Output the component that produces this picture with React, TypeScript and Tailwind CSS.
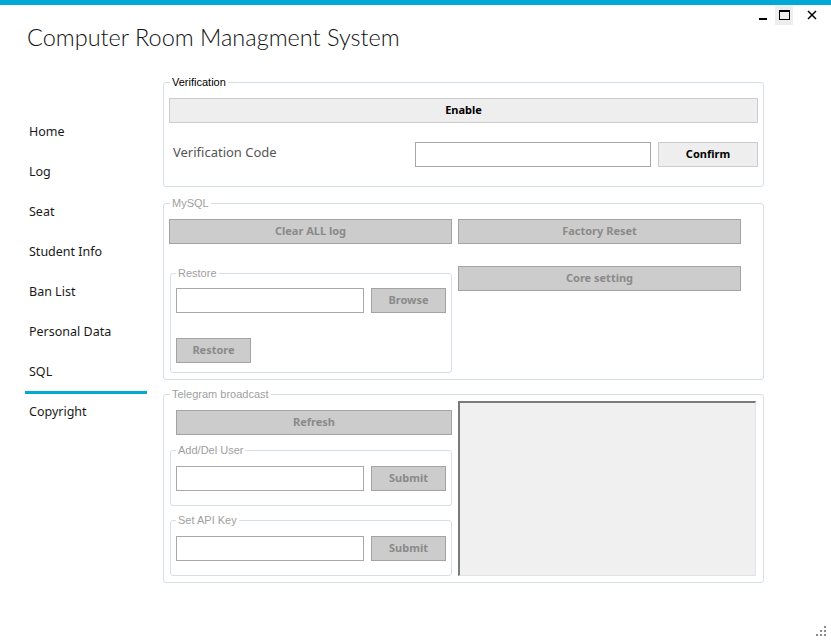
import React from "react";

const seg = { fontFamily: "'Noto Sans', 'Open Sans', sans-serif" };
const ms = { fontFamily: "'Liberation Sans', Arial, sans-serif" };
const light = { fontFamily: "Lato, 'Noto Sans', sans-serif" };

function Legend({ children, dim }: { children: React.ReactNode; dim?: boolean }) {
  return (
    <legend
      className={`ml-[1px] px-[2px] text-[11px] leading-[14px] ${dim ? "text-[#a0a0a0]" : "text-black"}`}
      style={ms}
    >
      {children}
    </legend>
  );
}

function Btn({ children, w, dim, className = "" }: { children: React.ReactNode; w: string; dim?: boolean; className?: string }) {
  return (
    <div
      className={`${w} h-[25px] flex items-center justify-center text-[11px] font-bold border ${
        dim ? "bg-[#cccccc] border-[#a3a3a3] text-[#8a8a8a]" : "bg-[#eeeeee] border-[#cccccc] text-black"
      } ${className}`}
      style={seg}
    >
      {children}
    </div>
  );
}

function Input({ w }: { w: string }) {
  return <div className={`${w} h-[25px] border border-[#a8a8a8] bg-white`} />;
}

export default function App() {
  const nav = ["Home", "Log", "Seat", "Student Info", "Ban List", "Personal Data", "SQL", "Copyright"];
  return (
    <div className="w-[831px] h-[641px] bg-white relative overflow-hidden">
      <div className="h-[5px] bg-[#00a9d6]" />
      <div className="flex h-[70px] justify-between">
        <div
          className="pl-[27px] pt-[16px] text-[23.5px] leading-[32px] font-light text-[#111]"
          style={light}
        >
          Computer Room Managment System
        </div>
        <div className="flex items-start pr-[7px]">
          <div className="w-[24px] h-[20px] flex items-center justify-center">
            <svg width="8" height="20" viewBox="0 0 8 20">
              <rect x="0" y="13" width="8" height="2" fill="#000" />
            </svg>
          </div>
          <div className="w-[18px] h-[20px] bg-[#eeeeee] flex items-center justify-center">
            <svg width="11" height="10" viewBox="0 0 11 10">
              <rect x="0.5" y="1" width="10" height="8.5" fill="none" stroke="#000" strokeWidth="1" />
              <rect x="0" y="0" width="11" height="2" fill="#000" />
            </svg>
          </div>
          <div className="ml-[7px] w-[24px] h-[20px] flex items-center justify-center">
            <svg width="10" height="10" viewBox="0 0 10 10">
              <path d="M1 1 L9 9 M9 1 L1 9" stroke="#000" strokeWidth="1.5" />
            </svg>
          </div>
        </div>
      </div>
      <div className="flex">
        <nav className="w-[163px] pt-[37px]">
          {nav.map((n) => (
            <div key={n} className="relative h-[40px] flex items-center pl-[29px] text-[12.5px] text-[#1a1a1a]" style={seg}>
              {n}
              {n === "SQL" && <div className="absolute left-[25px] bottom-[-2px] w-[122px] h-[3px] bg-[#00a9d6]" />}
            </div>
          ))}
        </nav>
        <main className="w-[601px]">
          {/* Verification */}
          <fieldset className="rounded-[3px] border border-[#d5dfe5] px-[5px] pt-[9px] pb-[19px] min-w-0">
            <Legend>Verification</Legend>
            <Btn w="w-full">Enable</Btn>
            <div className="mt-[19px] flex items-center">
              <div className="flex-1 pl-[4px] pb-[4px] text-[13px] text-[#555]" style={seg}>
                Verification Code
              </div>
              <Input w="w-[236px]" />
              <Btn w="w-[100px]" className="ml-[7px]">Confirm</Btn>
            </div>
          </fieldset>

          {/* MySQL */}
          <fieldset className="mt-[9px] rounded-[3px] border border-[#d5dfe5] px-[5px] pt-[9px] pb-[6px] min-w-0">
            <Legend dim>MySQL</Legend>
            <div className="flex gap-[6px]">
              <div className="w-[283px]">
                <Btn w="w-full" dim>Clear ALL log</Btn>
                <fieldset className="mt-[22px] ml-[1px] rounded-[3px] border border-[#d5dfe5] px-[5px] pt-[8px] pb-[9px] min-w-0">
                  <legend className="px-[2px] text-[11px] leading-[14px] text-[#a0a0a0]" style={ms}>Restore</legend>
                  <div className="flex items-center">
                    <Input w="w-[188px]" />
                    <Btn w="w-[75px]" dim className="ml-[7px]">Browse</Btn>
                  </div>
                  <Btn w="w-[75px]" dim className="mt-[25px]">Restore</Btn>
                </fieldset>
              </div>
              <div className="w-[283px]">
                <Btn w="w-full" dim>Factory Reset</Btn>
                <Btn w="w-full" dim className="mt-[22px]">Core setting</Btn>
              </div>
            </div>
          </fieldset>

          {/* Telegram */}
          <fieldset className="mt-[7px] rounded-[3px] border border-[#d5dfe5] px-[5px] pb-[6px] min-w-0">
            <Legend dim>Telegram broadcast</Legend>
            <div className="flex">
              <div className="w-[283px] pt-[9px]">
                <Btn w="w-[276px]" dim className="ml-[7px]">Refresh</Btn>
                <fieldset className="mt-[8px] ml-[1px] rounded-[3px] border border-[#d5dfe5] px-[5px] pt-[9px] pb-[14px] min-w-0">
                  <legend className="px-[2px] text-[11px] leading-[14px] text-[#a0a0a0]" style={ms}>Add/Del User</legend>
                  <div className="flex items-center">
                    <Input w="w-[188px]" />
                    <Btn w="w-[75px]" dim className="ml-[7px]">Submit</Btn>
                  </div>
                </fieldset>
                <fieldset className="mt-[7px] ml-[1px] rounded-[3px] border border-[#d5dfe5] px-[5px] pt-[9px] pb-[14px] min-w-0">
                  <legend className="px-[2px] text-[11px] leading-[14px] text-[#a0a0a0]" style={ms}>Set API Key</legend>
                  <div className="flex items-center">
                    <Input w="w-[188px]" />
                    <Btn w="w-[75px]" dim className="ml-[7px]">Submit</Btn>
                  </div>
                </fieldset>
              </div>
              <div className="ml-[6px] w-[298px] bg-[#f0f0f0] border-t-2 border-l-2 border-t-[#7a7a7a] border-l-[#7a7a7a] border-r border-b border-r-[#e3e3e3] border-b-[#e3e3e3]" />
            </div>
          </fieldset>
        </main>
      </div>
      <svg className="absolute right-[4px] bottom-[4px]" width="11" height="11" viewBox="0 0 11 11">
        {[[9, 1], [5, 5], [9, 5], [1, 9], [5, 9], [9, 9]].map(([x, y], i) => (
          <rect key={i} x={x - 1} y={y - 1} width="2" height="2" fill="#8a8a8a" />
        ))}
      </svg>
    </div>
  );
}
